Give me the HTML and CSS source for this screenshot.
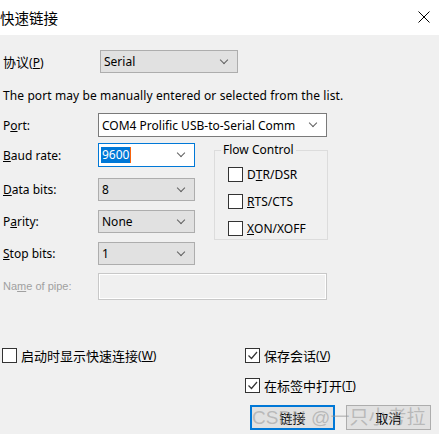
FILE: index.html
```html
<!DOCTYPE html>
<html lang="zh-CN">

<head>
    <meta charset="UTF-8" />
    <title>快速链接</title>
    <link rel="stylesheet" href="styles.css">
</head>

<body>
    <div class="window">
        <div class="titlebar">
            <span class="title">快速链接</span>
            <svg class="close" width="12" height="12" viewBox="0 0 12 12">
                <path d="M0.5 0.5 L11.5 11.5 M11.5 0.5 L0.5 11.5" stroke="#000" stroke-width="1" fill="none" />
            </svg>
        </div>

        <div class="dialog">
            <div class="row protocol">
                <span class="label cjk">协议<span class="mnemo">(<u>P</u>)</span></span>
                <div class="combo gray w138">
                    <span>Serial</span>
                    <span class="chev"></span>
                </div>
            </div>

            <p class="hint">The port may be manually entered or selected from the list.</p>

            <div class="row port">
                <span class="label short">P<u>o</u>rt:</span>
                <div class="combo white w229">
                    <span>COM4 Prolific USB-to-Serial Comm</span>
                    <span class="chev"></span>
                </div>
            </div>

            <div class="middle">
                <div class="left">
                    <div class="row baud">
                        <span class="label short"><u>B</u>aud rate:</span>
                        <div class="combo white focus w97">
                            <span class="sel">9600</span><span class="caret"></span>
                            <span class="chev"></span>
                        </div>
                    </div>
                    <div class="row bits">
                        <span class="label short"><u>D</u>ata bits:</span>
                        <div class="combo gray w97"><span>8</span><span class="chev"></span></div>
                    </div>
                    <div class="row next">
                        <span class="label short">P<u>a</u>rity:</span>
                        <div class="combo gray w97"><span>None</span><span class="chev"></span></div>
                    </div>
                    <div class="row next">
                        <span class="label short"><u>S</u>top bits:</span>
                        <div class="combo gray w97"><span>1</span><span class="chev"></span></div>
                    </div>
                </div>

                <fieldset class="flow">
                    <legend>Flow Control</legend>
                    <label class="check first"><span class="box"></span>D<u>T</u>R/DSR</label>
                    <label class="check"><span class="box"></span><u>R</u>TS/CTS</label>
                    <label class="check"><span class="box"></span><u>X</u>ON/XOFF</label>
                </fieldset>
            </div>

            <div class="row pipe">
                <span class="label short disabled">Na<u>m</u>e of pipe:</span>
                <div class="pipe-input"></div>
            </div>

            <div class="bottom">
                <div class="opts-left">
                    <label class="check cjk"><span class="box"></span>启动时显示快速连接<span class="mnemo">(<u>W</u>)</span></label>
                </div>
                <div class="opts-right">
                    <label class="check cjk"><span class="box on">
                            <svg width="11" height="11" viewBox="0 0 11 11"><path d="M1.5 5.5 L4.5 8.5 L10 2" stroke="#333" stroke-width="1.2" fill="none" /></svg>
                        </span>保存会话<span class="mnemo">(<u>V</u>)</span></label>
                    <label class="check cjk second"><span class="box on">
                            <svg width="11" height="11" viewBox="0 0 11 11"><path d="M1.5 5.5 L4.5 8.5 L10 2" stroke="#333" stroke-width="1.2" fill="none" /></svg>
                        </span>在标签中打开<span class="mnemo">(<u>T</u>)</span></label>
                    <div class="buttons">
                        <button class="btn default">链接</button>
                        <button class="btn">取消</button>
                        <span class="watermark">CSDN @一只小考拉</span>
                    </div>
                </div>
            </div>
        </div>
    </div>
</body>

</html>
```

FILE: styles.css
```css
body {
    margin: 0;
    background-color: #f0f0f0;
    font-family: "Noto Sans", "Noto Sans CJK SC", sans-serif;
    font-size: 12px;
    color: #000;
}

.window {
    width: 439px;
    height: 434px;
    overflow: hidden;
}

.titlebar {
    height: 35px;
    background-color: #fff;
    display: flex;
    align-items: center;
    justify-content: space-between;
}

.title {
    font-family: "Noto Sans CJK SC", sans-serif;
    font-size: 14.5px;
    margin-top: -1px;
}

.close {
    margin-right: 9px;
    margin-top: -2px;
}

.dialog {
    height: 399px;
    background-color: #f0f0f0;
}

.row {
    display: flex;
    align-items: center;
}

.label {
    padding-left: 3px;
    width: 97px;
    flex: none;
}

.label.short {
    width: 95px;
}

.cjk {
    font-family: "Noto Sans CJK SC", sans-serif;
    font-size: 13px;
}

.mnemo {
    font-family: "Noto Sans", sans-serif;
    font-size: 12px;
}

.protocol {
    margin-top: 15px;
    height: 23px;
}

.hint {
    margin: 0;
    margin-top: 15px;
    padding-left: 3px;
    height: 16px;
    line-height: 16px;
    letter-spacing: 0.1px;
}

.port {
    margin-top: 9px;
    height: 24px;
}

.combo {
    box-sizing: border-box;
    display: flex;
    align-items: center;
    position: relative;
    padding-left: 3px;
    height: 100%;
}

.combo.gray {
    background-color: #e1e1e1;
    border: 1px solid #adadad;
}

.combo.white {
    background-color: #fff;
    border: 1px solid #7a7a7a;
}

.combo.focus {
    border-color: #0078d7;
}

.w138 {
    width: 138px;
}

.w229 {
    width: 229px;
}

.w97 {
    width: 97px;
}

.chev {
    position: absolute;
    right: 10px;
    top: 50%;
    width: 5px;
    height: 5px;
    margin-top: -5px;
    border-right: 1px solid #606060;
    border-bottom: 1px solid #606060;
    transform: rotate(45deg);
}

.sel {
    background-color: #0078d7;
    color: #fff;
    padding: 0 1px;
    line-height: 16px;
    margin-left: -1px;
}

.caret {
    width: 1px;
    height: 16px;
    background-color: #f7630c;
}

.middle {
    display: flex;
    margin-top: 6px;
}

.left {
    width: 195px;
}

.baud {
    height: 24px;
}

.bits {
    height: 23px;
    margin-top: 11px;
}

.next {
    height: 23px;
    margin-top: 9px;
}

.flow {
    margin: 0;
    margin-left: 19px;
    margin-top: -1px;
    padding: 0 0 0 6px;
    width: 114px;
    height: 98px;
    box-sizing: border-box;
    border: 1px solid #dcdcdc;
}

.flow legend {
    padding: 0 2px;
    line-height: 16px;
}

.check {
    display: flex;
    align-items: center;
    height: 16px;
    white-space: nowrap;
}

.box {
    box-sizing: border-box;
    width: 15px;
    height: 15px;
    border: 1px solid #333;
    background-color: #fff;
    margin-right: 4px;
    display: flex;
    align-items: center;
    justify-content: center;
    flex: none;
}

.flow .check {
    margin-left: 7px;
    margin-top: 11px;
}

.flow .check.first {
    margin-top: 8px;
}

.pipe {
    margin-top: 7px;
    height: 28px;
}

.disabled {
    color: #a0a0a0;
    font-family: "Liberation Sans", sans-serif;
    font-size: 11px;
}

.pipe-input {
    box-sizing: border-box;
    width: 229px;
    height: 27px;
    border: 1px solid #c8c8c8;
    box-shadow: inset 1px 1px 0 #fff, inset -1px -1px 0 #fff;
}

.bottom {
    display: flex;
    margin-top: 47px;
}

.opts-left {
    width: 243px;
    padding-left: 2px;
}

.opts-right {
    display: flex;
    flex-direction: column;
}

.check.second {
    margin-top: 14px;
}

.buttons {
    display: flex;
    gap: 11px;
    margin-top: 12px;
    margin-left: 5px;
    position: relative;
}

.btn {
    box-sizing: border-box;
    width: 85px;
    height: 25px;
    background-color: #e1e1e1;
    border: 1px solid #adadad;
    font-family: "Noto Sans CJK SC", sans-serif;
    font-size: 13px;
    padding: 0;
}

.btn.default {
    border: 2px solid #0078d7;
}

.watermark {
    position: absolute;
    left: 2px;
    top: 0;
    font-family: "Liberation Sans", "Noto Sans CJK SC", sans-serif;
    font-size: 19px;
    line-height: 25px;
    color: rgba(150, 150, 150, 0.55);
    white-space: nowrap;
    pointer-events: none;
}
```
